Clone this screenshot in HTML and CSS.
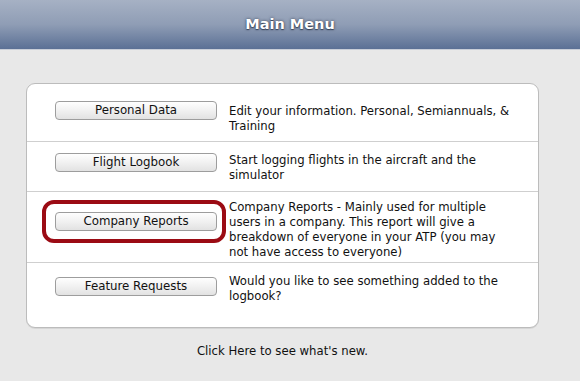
FILE: index.html
```html
<!DOCTYPE html>
<html>
<head>
<meta charset="utf-8">
<title>Main Menu</title>
<link rel="stylesheet" href="styles.css">
</head>
<body>
<header class="topbar"><h1 class="title">Main Menu</h1></header>
<main class="content">
  <section class="card">
    <div class="row row-1">
      <div class="btn-cell"><button class="btn">Personal Data</button></div>
      <p class="desc">Edit your information. Personal, Semiannuals, &amp; Training</p>
    </div>
    <div class="row row-2">
      <div class="btn-cell"><button class="btn">Flight Logbook</button></div>
      <p class="desc">Start logging flights in the aircraft and the simulator</p>
    </div>
    <div class="row row-3">
      <div class="btn-cell highlighted"><button class="btn">Company Reports</button></div>
      <p class="desc">Company Reports - Mainly used for multiple users in a company. This report will give a breakdown of everyone in your ATP (you may not have access to everyone)</p>
    </div>
    <div class="row row-4">
      <div class="btn-cell"><button class="btn">Feature Requests</button></div>
      <p class="desc">Would you like to see something added to the logbook?</p>
    </div>
  </section>
  <p class="news">Click Here to see what's new.</p>
</main>
</body>
</html>
```
FILE: styles.css
```css
html, body {
  margin: 0;
  padding: 0;
}
body {
  background: #e8e8e8;
  font-family: "DejaVu Sans", "Liberation Sans", sans-serif;
  color: #111;
  width: 580px;
  height: 381px;
  overflow: hidden;
}
.topbar {
  height: 49px;
  background: linear-gradient(#a6b1c4 0%, #8f9db5 50%, #5b7095 100%);
  border-bottom: 1px solid #c9ced8;
  display: flex;
  align-items: center;
  justify-content: center;
}
.title {
  margin: 0 0 2px 0;
  font-size: 14.5px;
  font-weight: bold;
  color: #fff;
  text-shadow: 0 0 3px rgba(20, 30, 50, 0.7), 0 1px 1px rgba(20, 30, 50, 0.6);
}
.content {
  padding: 33px 0 0 26px;
  width: 513px;
}
.card {
  background: #fff;
  border: 1px solid #bcbcbc;
  border-radius: 9px;
  box-shadow: 0 1px 0 #d6d6d6;
}
.row {
  display: flex;
  align-items: flex-start;
  box-sizing: border-box;
}
.row + .row {
  border-top: 1px solid #cfcfcf;
}
.row-1 { height: 57px; }
.row-2 { height: 50px; }
.row-3 { height: 71px; }
.row-4 { height: 65px; }
.btn-cell {
  position: relative;
  margin-left: 28px;
  width: 162px;
  flex: none;
}
.row-1 .btn-cell { margin-top: 17px; }
.row-2 .btn-cell { margin-top: 11px; }
.row-3 .btn-cell { margin-top: 20px; }
.row-4 .btn-cell { margin-top: 14px; }
.btn {
  display: block;
  width: 162px;
  height: 19px;
  padding: 0;
  border: 1px solid #9d9d9d;
  border-radius: 4px;
  background: linear-gradient(#fefefe 0%, #f1f1f1 50%, #e2e2e2 100%);
  font-family: "DejaVu Sans", "Liberation Sans", sans-serif;
  font-size: 11.8px;
  color: #111;
  line-height: 17px;
  text-align: center;
}
.highlighted::after {
  content: "";
  position: absolute;
  left: -13px;
  top: -12px;
  right: -9px;
  bottom: -12px;
  border: 4px solid #9b0b14;
  border-radius: 12px;
}
.desc {
  margin: 0 0 0 12px;
  width: 286px;
  font-size: 11.7px;
  line-height: 15px;
}
.row-1 .desc { margin-top: 20px; }
.row-2 .desc { margin-top: 11px; }
.row-3 .desc { margin-top: 8px; }
.row-4 .desc { margin-top: 11px; }
.news {
  margin: 16px 0 0 0;
  text-align: center;
  font-size: 11.7px;
  line-height: 15px;
}
```
